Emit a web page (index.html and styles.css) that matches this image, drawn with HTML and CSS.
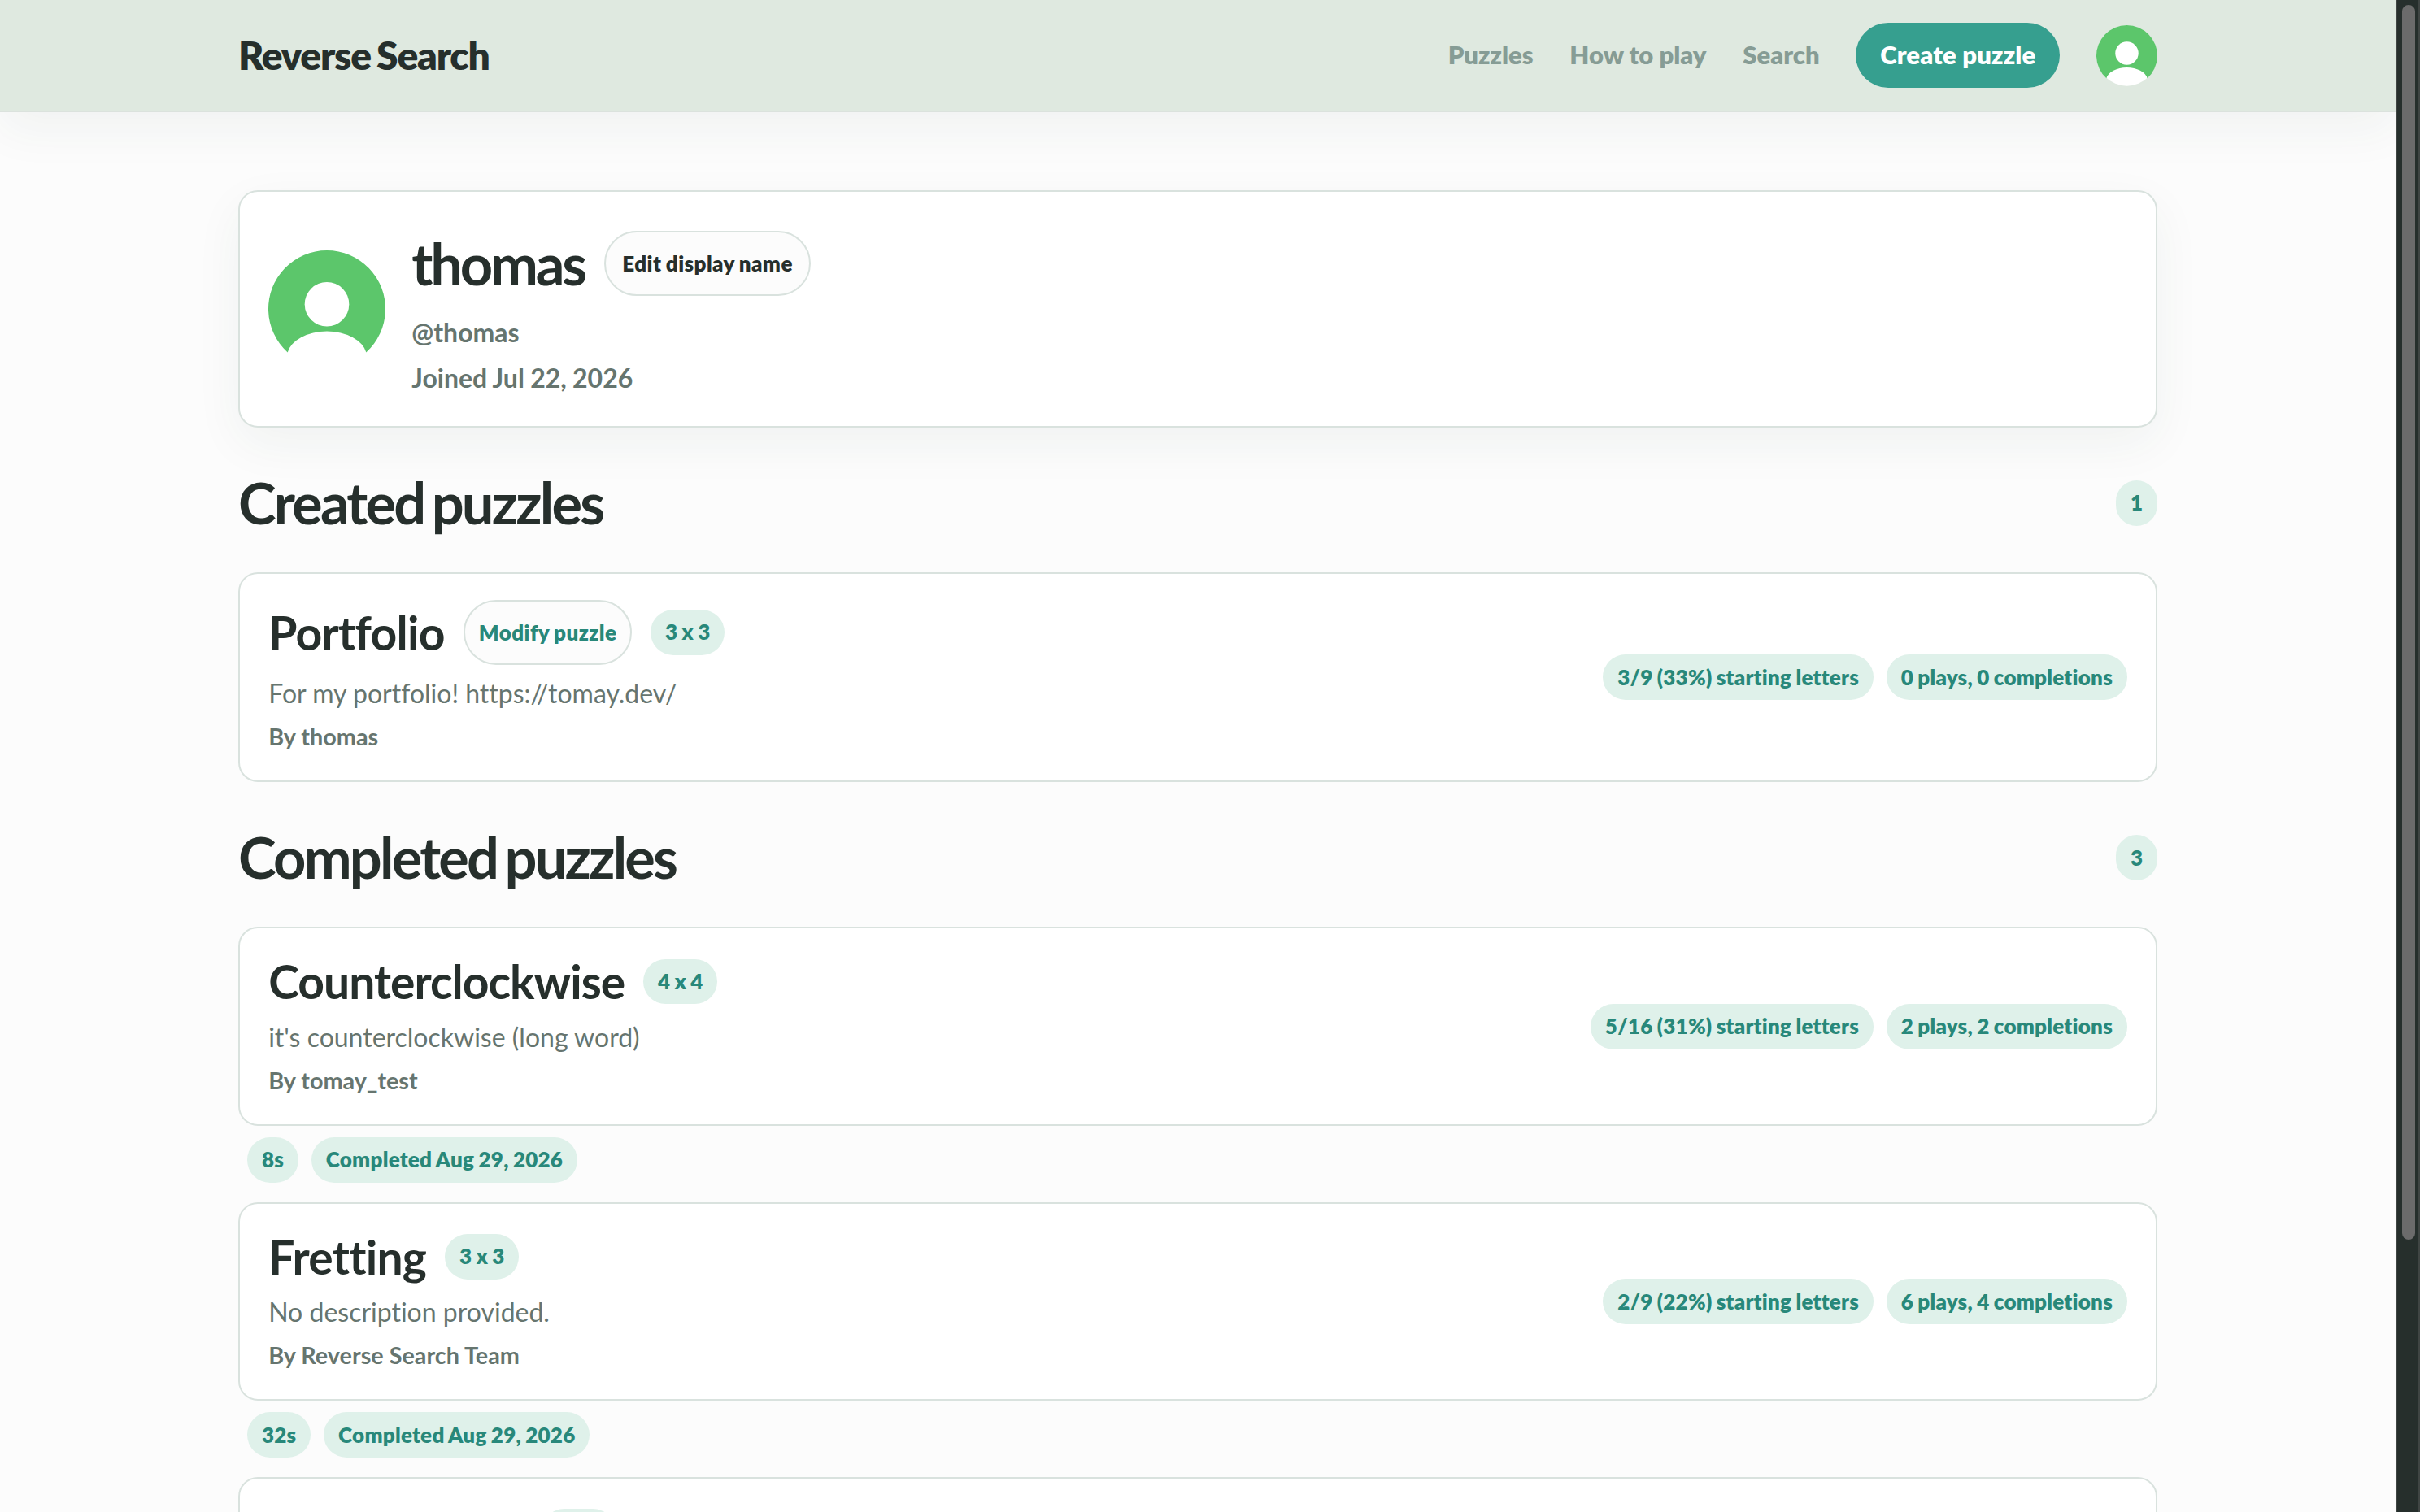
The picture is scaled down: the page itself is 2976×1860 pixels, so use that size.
FILE: index.html
```html
<!DOCTYPE html>
<html lang="en">
<head>
<meta charset="utf-8">
<title>thomas - Reverse Search</title>
<link rel="stylesheet" href="styles.css">
</head>
<body>
<svg class="defs" aria-hidden="true">
  <defs>
    <symbol id="avatar" viewBox="0 0 144 144">
      <circle cx="72" cy="72" r="71.4" fill="#fff"/>
      <path d="M23.7 125.4A72 72 0 1 1 120.3 125.4A49 31 0 0 0 23.7 125.4Z" fill="#5cc66b"/>
      <circle cx="72" cy="66.3" r="27.3" fill="#fff"/>
    </symbol>
  </defs>
</svg>
<div class="page">
  <header class="topbar">
    <div class="wrap topbar-row">
      <a class="logo">Reverse Search</a>
      <nav class="nav">
        <a>Puzzles</a>
        <a>How to play</a>
        <a>Search</a>
        <a class="create">Create puzzle</a>
        <svg class="avatar-small"><use href="#avatar"/></svg>
      </nav>
    </div>
  </header>
  <main class="wrap">
    <section class="profile">
      <svg class="avatar-large"><use href="#avatar"/></svg>
      <div class="profile-text">
        <div class="profile-name">
          <h1>thomas</h1>
          <button class="btn edit">Edit display name</button>
        </div>
        <p>@thomas</p>
        <p>Joined Jul 22, 2026</p>
      </div>
    </section>

    <div class="section-head"><h2>Created puzzles</h2><span class="pill">1</span></div>
    <article class="card">
      <div>
        <div class="card-title"><h3>Portfolio</h3><button class="btn modify">Modify puzzle</button><span class="pill">3 x 3</span></div>
        <p class="desc">For my portfolio! https://tomay.dev/</p>
        <p class="by">By thomas</p>
      </div>
      <div class="stats"><span class="pill">3/9 (33%) starting letters</span><span class="pill">0 plays, 0 completions</span></div>
    </article>

    <div class="section-head"><h2>Completed puzzles</h2><span class="pill">3</span></div>
    <article class="card">
      <div>
        <div class="card-title"><h3 class="long">Counterclockwise</h3><span class="pill">4 x 4</span></div>
        <p class="desc">it's counterclockwise (long word)</p>
        <p class="by">By tomay_test</p>
      </div>
      <div class="stats"><span class="pill">5/16 (31%) starting letters</span><span class="pill">2 plays, 2 completions</span></div>
    </article>
    <div class="result"><span class="pill">8s</span><span class="pill">Completed Aug 29, 2026</span></div>
    <article class="card">
      <div>
        <div class="card-title"><h3>Fretting</h3><span class="pill">3 x 3</span></div>
        <p class="desc">No description provided.</p>
        <p class="by">By Reverse Search Team</p>
      </div>
      <div class="stats"><span class="pill">2/9 (22%) starting letters</span><span class="pill">6 plays, 4 completions</span></div>
    </article>
    <div class="result"><span class="pill">32s</span><span class="pill">Completed Aug 29, 2026</span></div>
    <article class="card next">
      <div class="card-title"><h3></h3><span class="pill"></span></div>
    </article>
  </main>
</div>
<div class="scrollbar"><div class="thumb"></div></div>
</body>
</html>
```
FILE: styles.css
```css
:root {
  --ink: #262f2c;
  --muted: #66756f;
  --line: #d9e2de;
  --teal: #28887a;
  --mint: #dff1ea;
  --paper: #fcfcfc;
  --shadow: 0 20px 60px rgba(38, 70, 50, 0.055);
}

* { box-sizing: border-box; margin: 0; padding: 0; }

body {
  display: flex;
  height: 1860px;
  overflow: hidden;
  background: var(--paper);
  color: var(--ink);
  font-family: Lato, sans-serif;
  font-size: 32px;
  font-variant-ligatures: none;
  white-space: nowrap;
}

.defs { position: absolute; width: 0; height: 0; }

.page { flex: 1; min-width: 0; overflow: hidden; }
.wrap { width: 2360px; margin: 0 auto; }

.topbar {
  height: 138px;
  padding-top: 28px;
  background: #dfe9e0;
  border-bottom: 2px solid #dbe2dd;
  box-shadow: var(--shadow);
}
.topbar-row { display: flex; align-items: center; justify-content: space-between; height: 80px; }
.logo { font-size: 48px; font-weight: 800; letter-spacing: -1.25px; word-spacing: -2.5px; padding-bottom: 2px; }
.nav {
  display: flex;
  align-items: center;
  gap: 44.8px;
  font-size: 31px;
  font-weight: 800;
  color: #869c95;
}
.nav a { padding-bottom: 2px; }
.nav .create {
  display: flex;
  align-items: center;
  height: 80px;
  padding: 0 29.8px 2px;
  border-radius: 40px;
  background: #369f8f;
  color: #fff;
  letter-spacing: 0.16px;
}
.avatar-small { width: 75px; height: 75px; }

.profile {
  display: flex;
  align-items: center;
  gap: 32px;
  height: 292px;
  margin-top: 96px;
  padding: 0 35.2px;
  background: #fff;
  border: 2px solid var(--line);
  border-radius: 24px;
  box-shadow: var(--shadow);
}
.avatar-large { width: 144px; height: 144px; }
.profile-text { padding-top: 13.6px; color: var(--muted); font-weight: 700; }
.profile-text p { line-height: 50px; }
.profile-text p + p { margin-top: 6px; word-spacing: -0.5px; }
.profile-name { display: flex; align-items: center; gap: 24px; height: 80px; margin-bottom: 19.6px; color: var(--ink); }

h1, h2 { font-size: 70.4px; line-height: 80px; font-weight: 700; letter-spacing: -2.8px; word-spacing: -5px; padding-bottom: 3px; }
h1 { letter-spacing: -3.2px; padding-bottom: 1px; }

.btn {
  height: 80px;
  border: 2px solid var(--line);
  border-radius: 40px;
  background: var(--paper);
  font: 800 26px Lato, sans-serif;
  letter-spacing: 0.43px;
  word-spacing: -1px;
  color: var(--ink);
}
.edit { padding: 0 20.3px; }
.modify { padding: 0 16.8px 1px; color: var(--teal); }

.pill {
  display: inline-flex;
  align-items: center;
  height: 55.8px;
  padding: 0 17.8px 1px;
  border-radius: 28px;
  background: var(--mint);
  color: var(--teal);
  font-size: 26px;
  font-weight: 800;
  letter-spacing: 0.24px;
  word-spacing: -1px;
}

.section-head { display: flex; align-items: center; justify-content: space-between; height: 84px; margin: 51px 0 43px; }

.card {
  display: flex;
  align-items: center;
  justify-content: space-between;
  padding: 32px 35.2px;
  background: #fff;
  border: 2px solid var(--line);
  border-radius: 24px;
}
.card-title { display: flex; align-items: center; gap: 23px; min-height: 66.2px; }
h3 { font-size: 57px; line-height: 66px; font-weight: 700; letter-spacing: -0.7px; }
h3.long { letter-spacing: -0.97px; }
.desc { margin-top: 11.2px; line-height: 48px; color: var(--muted); }
.by { margin-top: 8px; font-size: 28.8px; line-height: 43.2px; font-weight: 700; color: var(--muted); }
.stats, .result { display: flex; gap: 16px; }
.result { margin: 14px 0 24px; padding-left: 11.2px; }

.next { height: 244px; align-items: flex-start; }
.next h3 { width: 313px; }
.next .pill { width: 91px; }

.scrollbar {
  width: 30px;
  padding: 6px 4px 0 6px;
  background: #262f2c;
  border: solid #3f4543;
  border-width: 0 2px;
  position: relative;
}
.thumb { width: 16px; height: 1519px; border-radius: 8px; background: #6b6b6b; }
```
